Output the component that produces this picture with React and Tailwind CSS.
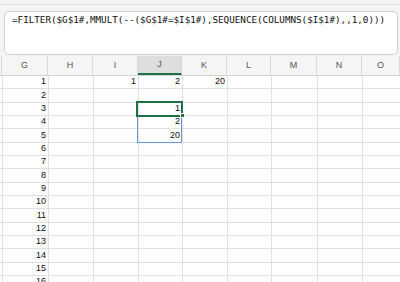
import React from "react";

const cols = [
  { key: "F", w: "w-[2px]", label: "" },
  { key: "G", w: "w-[46px]", label: "G" },
  { key: "H", w: "w-[45px]", label: "H" },
  { key: "I", w: "w-[45px]", label: "I" },
  { key: "J", w: "w-[44px]", label: "J" },
  { key: "K", w: "w-[45px]", label: "K" },
  { key: "L", w: "w-[44px]", label: "L" },
  { key: "M", w: "w-[46px]", label: "M" },
  { key: "N", w: "w-[45px]", label: "N" },
  { key: "O", w: "w-[38px]", label: "O" },
];

const data = {
  1: { G: "1", I: "1", J: "2", K: "20" },
  3: { J: "1" },
  4: { J: "2" },
  5: { J: "20" },
};

const heights = ["h-[13px]", "h-[14px]", "h-[13px]"];

export default function App() {
  const rows = Array.from({ length: 16 }, (_, i) => i + 1);
  return (
    <div className="relative w-[400px] h-[282px] overflow-hidden bg-white font-['Liberation_Sans',Arial,sans-serif]">
      {/* formula bar area */}
      <div className="h-[56px] bg-[#f4f4f4] flex flex-col">
        <div className="h-[4px]" />
        <div className="h-px bg-[#e3e3e3]" />
        <div className="h-[6px]" />
        <div className="h-[44px] ml-[4px] mr-[2px] bg-white border border-[#d1d1d1] rounded-[5px] pl-[7px] pt-[2px]">
          <div className="font-['DejaVu_Sans_Mono','Liberation_Mono',monospace] text-[9.25px] leading-[12px] text-[#111111] whitespace-nowrap">
            =FILTER($G$1#,MMULT(--($G$1#=$I$1#),SEQUENCE(COLUMNS($I$1#),,1,0)))
          </div>
        </div>
      </div>

      {/* column headers */}
      <div className="flex h-[20px] bg-[#f5f5f5] border-b border-[#d4d4d4]">
        {cols.map((c) => (
          <div
            key={c.key}
            className={
              c.w +
              " shrink-0 flex items-center justify-center text-[9px] text-[#555555] border-r border-[#dadada] " +
              (c.key === "J" ? "bg-[#dedede] border-b-2 border-b-[#1e7145]" : "")
            }
          >
            {c.label}
          </div>
        ))}
      </div>

      {/* rows */}
      {rows.map((r, i) => (
        <div key={r} className={"flex " + heights[i % 3]}>
          {cols.map((c) => {
            const v = c.key === "G" ? String(r) : (data[r] && data[r][c.key]) || "";
            return (
              <div
                key={c.key}
                className={
                  c.w +
                  " shrink-0 flex items-center justify-end pr-[2px] text-[9px] text-[#111111] border-r border-b border-[#e2e2e2]"
                }
              >
                {v}
              </div>
            );
          })}
        </div>
      ))}

      {/* spill range border */}
      <div className="absolute left-[137px] top-[102px] w-[45px] h-[41px] border border-[#6e98dc]" />
      {/* active cell */}
      <div className="absolute left-[136px] top-[101px] w-[47px] h-[16px] border-2 border-[#1e7145]" />
      {/* fill handle */}
      <div className="absolute left-[180px] top-[113px] w-[5px] h-[5px] bg-[#1e7145] border border-white" />
    </div>
  );
}
